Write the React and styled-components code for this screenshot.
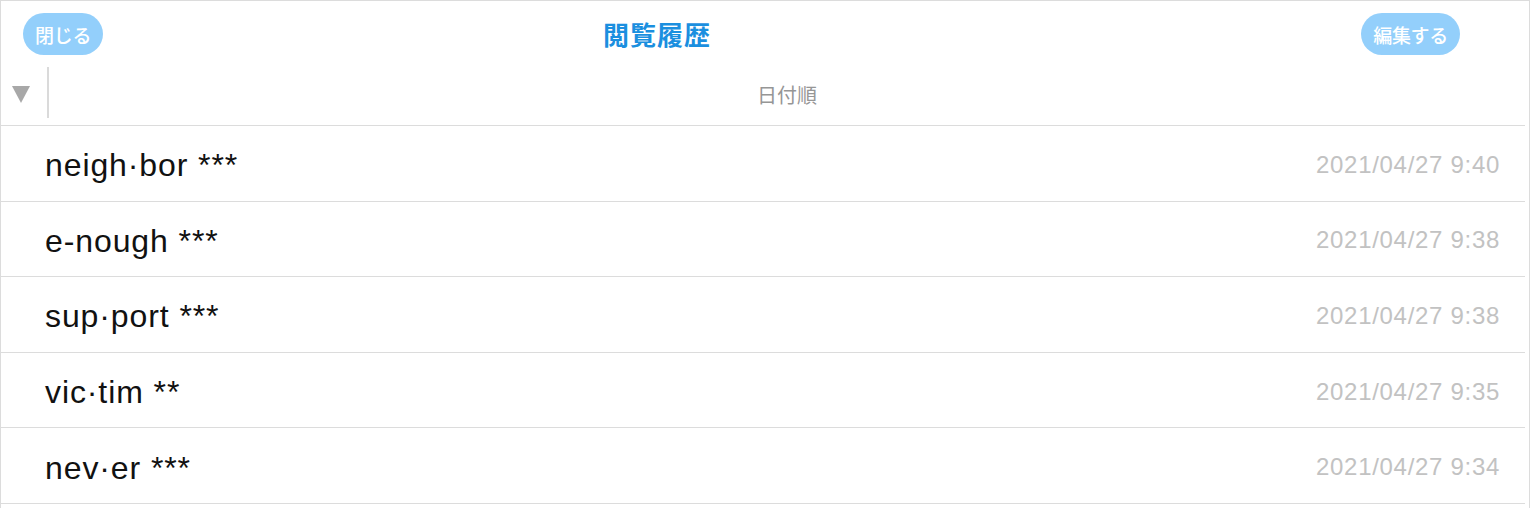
import styled, { createGlobalStyle } from 'styled-components'

const GlobalStyle = createGlobalStyle`
  html, body {
    margin: 0;
    padding: 0;
    background: #fff;
  }
  body {
    font-family: "Liberation Sans", Arial, "Noto Sans CJK JP", sans-serif;
  }
`

//Data
const history = [
  { word: 'neigh·bor', stars: '***', date: '2021/04/27 9:40' },
  { word: 'e-nough', stars: '***', date: '2021/04/27 9:38' },
  { word: 'sup·port', stars: '***', date: '2021/04/27 9:38' },
  { word: 'vic·tim', stars: '**', date: '2021/04/27 9:35' },
  { word: 'nev·er', stars: '***', date: '2021/04/27 9:34' }
]

const App = () => {
  return (
    <>
      <GlobalStyle />
      <Panel>
        <Header>
          <PillButton>閉じる</PillButton>
          <Title>閲覧履歴</Title>
          <PillButton $right>編集する</PillButton>
        </Header>
        <SortBar>
          <SortToggle>
            <Triangle />
          </SortToggle>
          <SortLabel>日付順</SortLabel>
        </SortBar>
        <List>
          {history.map((item) => (
            <Row key={item.word}>
              <Word>
                {item.word} {item.stars}
              </Word>
              <Stamp>{item.date}</Stamp>
            </Row>
          ))}
        </List>
      </Panel>
    </>
  )
}

const Panel = styled.div`
  width: 1530px;
  height: 508px;
  border: 1px solid #dcdcdc;
  border-bottom: none;
  overflow: hidden;
  box-sizing: border-box;
`

const Header = styled.div`
  display: flex;
  align-items: flex-start;
  height: 63px;
  padding: 12px 0 0 22px;
  box-sizing: border-box;
`

const PillButton = styled.button`
  height: 42px;
  padding: 0 12px;
  border: none;
  border-radius: 21px;
  background: #93cffb;
  color: #fff;
  font-family: "Noto Sans CJK JP", sans-serif;
  font-size: 19px;
  font-weight: 500;
  letter-spacing: -0.3px;
  cursor: pointer;
  margin-left: ${(p) => (p.$right ? 'auto' : '0')};
  margin-right: ${(p) => (p.$right ? '69px' : '0')};
`

const Title = styled.h1`
  margin: 5px 0 0 500px;
  font-family: "Noto Sans CJK JP", sans-serif;
  font-size: 26px;
  font-weight: 700;
  color: #1b8fdf;
  line-height: 32px;
  letter-spacing: 1px;
`

const SortBar = styled.div`
  display: flex;
  align-items: stretch;
  height: 62px;
  padding: 3px 0 7px 0;
  box-sizing: border-box;
  border-bottom: 1px solid #dcdcdc;
  margin-right: 4px;
`

const SortToggle = styled.div`
  width: 48px;
  display: flex;
  align-items: center;
  padding-left: 11px;
  box-sizing: border-box;
  border-right: 2px solid #dadada;
`

const Triangle = styled.span`
  width: 0;
  height: 0;
  border-left: 9px solid transparent;
  border-right: 9px solid transparent;
  border-top: 17px solid #a8a8a8;
  margin-top: 4px;
`

const SortLabel = styled.div`
  flex: 1;
  display: flex;
  align-items: center;
  justify-content: center;
  padding-top: 4px;
  font-family: "Noto Sans CJK JP", sans-serif;
  font-size: 20px;
  color: #969696;
`

const List = styled.div`
  margin-right: 4px;
`

const Row = styled.div`
  display: flex;
  align-items: center;
  justify-content: space-between;
  height: 75.6px;
  padding: 0 25px 0 44px;
  box-sizing: border-box;
  border-bottom: 1px solid #dcdcdc;
`

const Word = styled.span`
  font-size: 32px;
  letter-spacing: 0.9px;
  color: #111;
  padding-top: 5px;
`

const Stamp = styled.span`
  font-size: 24px;
  letter-spacing: 0.7px;
  color: #c2c2c2;
  padding-top: 3px;
`

export default App
